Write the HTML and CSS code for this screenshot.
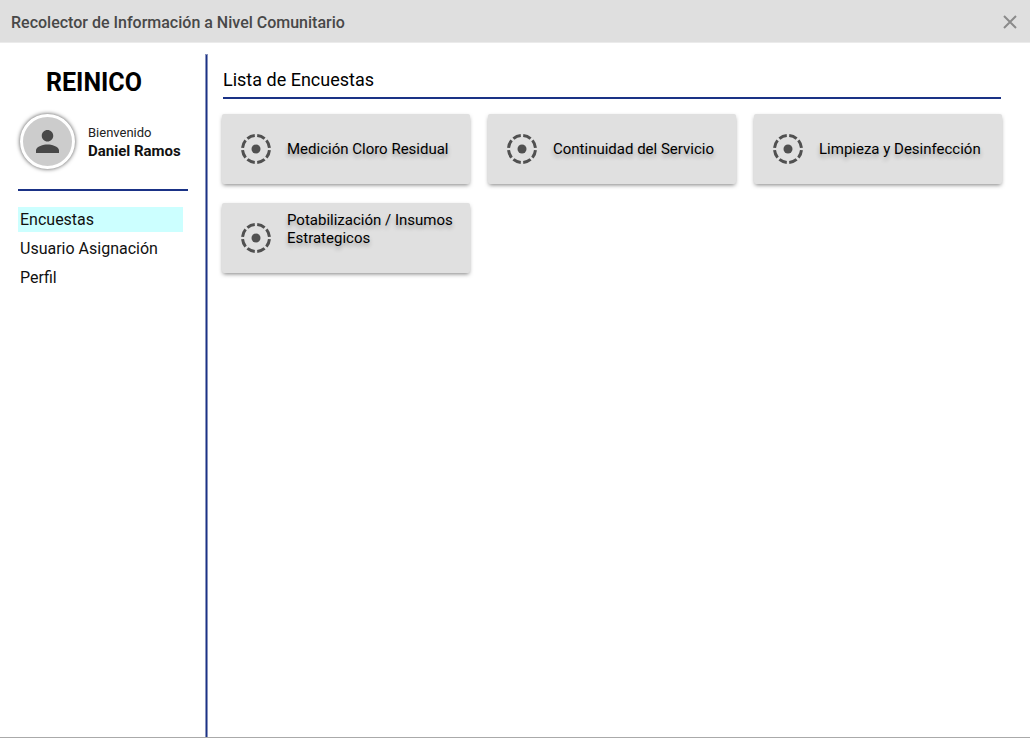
FILE: index.html
```html
<!DOCTYPE html>
<html lang="es">
<head>
<meta charset="utf-8">
<title>Recolector de Información a Nivel Comunitario</title>
<link rel="stylesheet" href="styles.css">
</head>
<body>
<svg class="defs" aria-hidden="true">
  <symbol id="survey" viewBox="0 0 30 30">
    <circle cx="15" cy="15" r="13.5" fill="none" stroke="currentColor" stroke-width="3" pathLength="80" stroke-dasharray="7.6 2.4" stroke-dashoffset="-1.2"/>
    <circle cx="15" cy="15" r="4.5" fill="currentColor"/>
  </symbol>
</svg>
<header class="titlebar">
  <span class="titlebar-text">Recolector de Información a Nivel Comunitario</span>
  <button class="close" type="button" aria-label="Cerrar">
    <svg class="close-icon" viewBox="0 0 14 14"><path d="M1 1 13 13M13 1 1 13" fill="none" stroke="currentColor" stroke-width="2"/></svg>
  </button>
</header>
<div class="layout">
  <aside class="sidebar">
    <h1 class="brand">REINICO</h1>
    <div class="profile">
      <div class="avatar">
        <svg class="avatar-icon" viewBox="4 4 16 16"><path fill="currentColor" d="M12 12c2.210 0 4-1.790 4-4s-1.790-4-4-4-4 1.790-4 4 1.790 4 4 4zm0 2c-2.670 0-8 1.340-8 4v2h16v-2c0-2.660-5.330-4-8-4z"/></svg>
      </div>
      <div class="greeting">
        <span class="hello">Bienvenido</span>
        <strong class="user">Daniel Ramos</strong>
      </div>
    </div>
    <nav class="menu">
      <a class="menu-link active" href="#encuestas">Encuestas</a>
      <a class="menu-link" href="#usuarios">Usuario Asignación</a>
      <a class="menu-link" href="#perfil">Perfil</a>
    </nav>
  </aside>
  <div class="divider"></div>
  <main class="content">
    <h2 class="heading">Lista de Encuestas</h2>
    <div class="cards">
      <button class="card" type="button"><svg class="card-icon"><use href="#survey"/></svg><span class="card-text">Medición Cloro Residual</span></button>
      <button class="card" type="button"><svg class="card-icon"><use href="#survey"/></svg><span class="card-text">Continuidad del Servicio</span></button>
      <button class="card" type="button"><svg class="card-icon"><use href="#survey"/></svg><span class="card-text">Limpieza y Desinfección</span></button>
      <button class="card" type="button"><svg class="card-icon"><use href="#survey"/></svg><span class="card-text card-text-long">Potabilización / Insumos Estrategicos</span></button>
    </div>
  </main>
</div>
</body>
</html>
```
FILE: styles.css
```css
* { box-sizing: border-box; }
body {
  margin: 0;
  min-height: 100vh;
  display: flex;
  flex-direction: column;
  background: #fff;
  color: #000;
  font-family: Roboto, sans-serif;
  border-bottom: 1px solid #aaa;
}
.defs { display: none; }
.titlebar {
  display: flex;
  align-items: center;
  justify-content: space-between;
  height: 43px;
  padding: 2px 13px 0 11px;
  background: #dfdfdf;
  border-bottom: 1px solid #ebebeb;
  color: #484848;
  font-size: 16px;
  font-weight: 500;
}
.close {
  display: flex;
  padding: 0;
  border: 0;
  background: none;
  color: #8b8b8b;
}
.close-icon { width: 14px; height: 14px; }
.layout { flex: 1; display: flex; padding-top: 11px; }
.sidebar {
  flex: none;
  width: 205px;
  padding: 15px 17px 0 18px;
}
.divider {
  flex: none;
  width: 3px;
  background: #1a3286;
  border: solid #8993bd;
  border-width: 1px 1px 0;
}
.brand {
  width: 152px;
  margin: 0;
  font-size: 25px;
  line-height: 28px;
  font-weight: 700;
  text-align: center;
}
.profile {
  display: flex;
  align-items: center;
  gap: 13px;
  height: 94px;
  padding: 0 0 3px 2px;
  border-bottom: 2px solid #1a3286;
}
.avatar {
  display: flex;
  align-items: center;
  justify-content: center;
  flex: none;
  width: 55px;
  height: 55px;
  border: 3px solid #fff;
  border-radius: 50%;
  background: #ccc;
  box-shadow: 0 0 4px rgba(0, 0, 0, .7);
  color: #484848;
}
.avatar-icon { width: 23px; height: 23px; }
.greeting { display: flex; flex-direction: column; white-space: nowrap; }
.hello { font-size: 13px; line-height: 18px; color: #222; font-weight: 450; }
.user { font-size: 15px; line-height: 18px; font-weight: 700; color: #111; }
.menu {
  display: flex;
  flex-direction: column;
  gap: 4px;
  padding: 16px 5px 0 0;
}
.menu-link {
  padding-left: 2px;
  color: #111;
  font-size: 16px;
  font-weight: 450;
  line-height: 25px;
  text-decoration: none;
}
.active { background: #cff; }
.content { flex: 1; padding: 15px 28px 0 14px; }
.heading {
  margin: 0 1px 15px;
  padding-bottom: 6px;
  border-bottom: 2px solid #1a3286;
  font-size: 18px;
  line-height: 22px;
  font-weight: 450;
}
.cards {
  display: grid;
  grid-template-columns: repeat(3, 1fr);
  gap: 19px 18px;
}
.card {
  display: flex;
  align-items: center;
  gap: 16px;
  height: 70px;
  padding: 0 12px 0 19px;
  border: 0;
  border-radius: 2px;
  background: #e0e0e0;
  box-shadow: 0 2px 4px -1px rgba(0, 0, 0, .5);
  color: #000;
  font-family: inherit;
  font-size: 15px;
  line-height: 18px;
  text-align: left;
}
.card-icon { flex: none; width: 30px; height: 30px; color: #505050; }
.card-text { text-shadow: 0 3px 4px rgba(0, 0, 0, .3); }
.card-text-long { padding-bottom: 18px; }
```
